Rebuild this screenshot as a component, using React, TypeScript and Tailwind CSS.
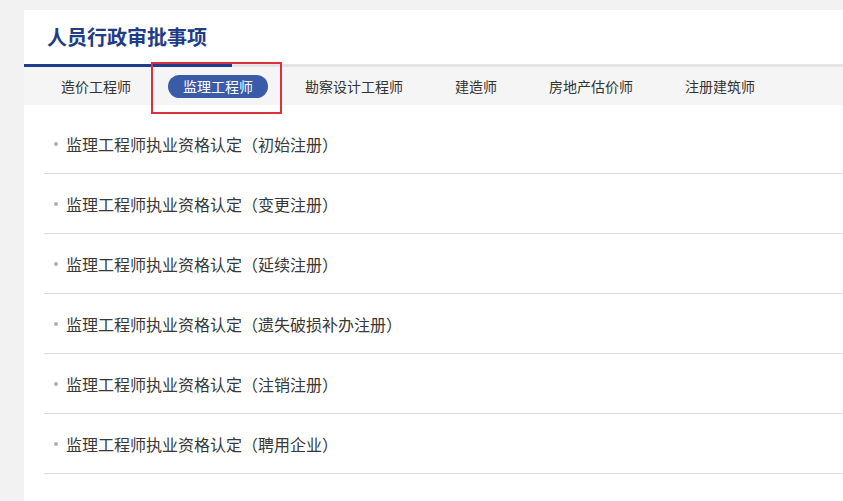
const tabs = ["造价工程师", "监理工程师", "勘察设计工程师", "建造师", "房地产估价师", "注册建筑师"];

const items = [
  "监理工程师执业资格认定（初始注册）",
  "监理工程师执业资格认定（变更注册）",
  "监理工程师执业资格认定（延续注册）",
  "监理工程师执业资格认定（遗失破损补办注册）",
  "监理工程师执业资格认定（注销注册）",
  "监理工程师执业资格认定（聘用企业）",
];

function App() {
  return (
    <div
      className="min-h-[501px] bg-[#f2f2f2] pt-[10px] pl-[24px]"
      style={{ fontFamily: '"Noto Sans CJK SC", "Noto Sans", sans-serif' }}
    >
      <div className="bg-white min-h-[491px]">
        {/* Title */}
        <div className="h-[54px] flex items-center pl-[23px]">
          <h1 className="text-[20px] font-bold text-[#1e3c87] leading-none">人员行政审批事项</h1>
        </div>

        {/* Underline */}
        <div className="h-[3px] bg-[#e4e4e4]">
          <div className="h-full w-[208px] bg-[#1f3d8c]" />
        </div>

        {/* Tabs */}
        <div className="h-[38px] bg-[#f5f5f5] flex items-center gap-[52px] pl-[37px] text-[14px] text-[#333]">
          {tabs.map((t, i) =>
            i === 1 ? (
              <div key={t} className="relative -mx-[15px]">
                <span className="block h-[23px] leading-[23px] px-[15px] rounded-full bg-[#3a5ca8] text-white">
                  {t}
                </span>
                <div className="absolute -left-[17px] -right-[14px] -top-[13px] -bottom-[16px] border-2 border-[#d8343c]" />
              </div>
            ) : (
              <span key={t} className="leading-[23px]">
                {t}
              </span>
            )
          )}
        </div>

        {/* List */}
        <ul className="ml-[20px] pt-[9px]">
          {items.map((t) => (
            <li
              key={t}
              className="h-[60px] flex items-center border-b border-[#dcdcdc] text-[16px] text-[#383838]"
            >
              <span className="w-[4px] h-[4px] rounded-full bg-[#b0b0b0] ml-[10px] mr-[8px]" />
              {t}
            </li>
          ))}
        </ul>
      </div>
    </div>
  );
}

export default App;
